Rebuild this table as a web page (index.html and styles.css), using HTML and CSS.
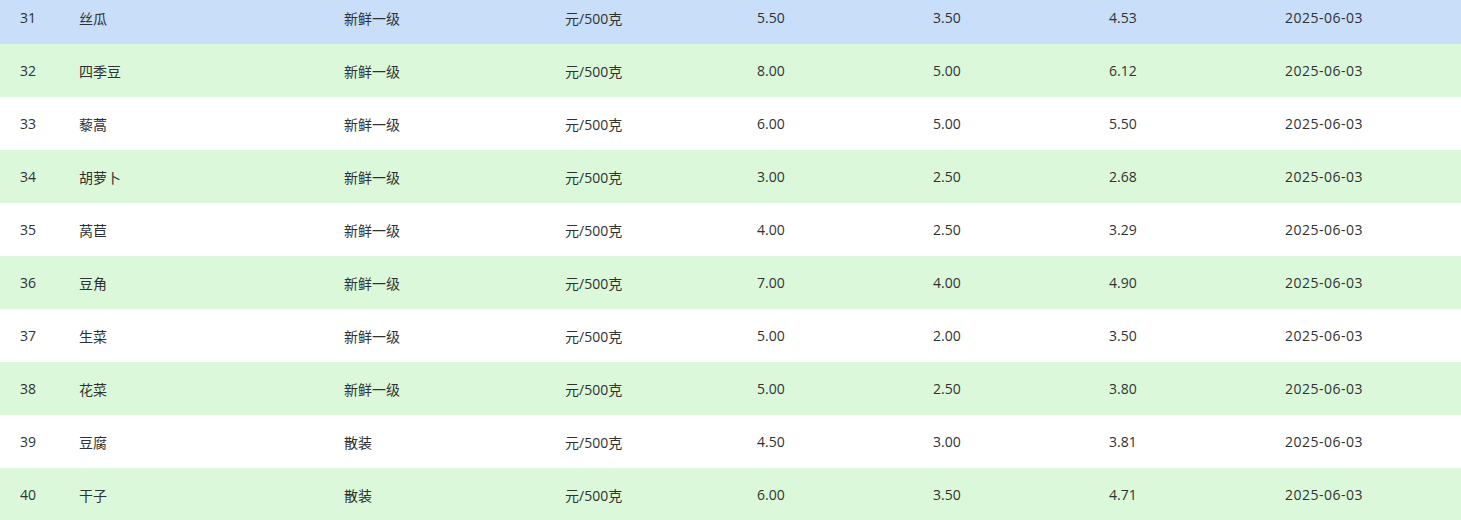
FILE: index.html
```html
<!DOCTYPE html>
<html lang="zh-CN">
<head>
<meta charset="utf-8">
<link rel="stylesheet" href="styles.css">
</head>
<body>
<div class="table">
  <div class="row current"><span class="c-idx">31</span><span>丝瓜</span><span>新鲜一级</span><span>元/500克</span><span>5.50</span><span>3.50</span><span>4.53</span><span class="date">2025-06-03</span></div>
  <div class="row alt"><span class="c-idx">32</span><span>四季豆</span><span>新鲜一级</span><span>元/500克</span><span>8.00</span><span>5.00</span><span>6.12</span><span class="date">2025-06-03</span></div>
  <div class="row"><span class="c-idx">33</span><span>藜蒿</span><span>新鲜一级</span><span>元/500克</span><span>6.00</span><span>5.00</span><span>5.50</span><span class="date">2025-06-03</span></div>
  <div class="row alt"><span class="c-idx">34</span><span>胡萝卜</span><span>新鲜一级</span><span>元/500克</span><span>3.00</span><span>2.50</span><span>2.68</span><span class="date">2025-06-03</span></div>
  <div class="row"><span class="c-idx">35</span><span>莴苣</span><span>新鲜一级</span><span>元/500克</span><span>4.00</span><span>2.50</span><span>3.29</span><span class="date">2025-06-03</span></div>
  <div class="row alt"><span class="c-idx">36</span><span>豆角</span><span>新鲜一级</span><span>元/500克</span><span>7.00</span><span>4.00</span><span>4.90</span><span class="date">2025-06-03</span></div>
  <div class="row"><span class="c-idx">37</span><span>生菜</span><span>新鲜一级</span><span>元/500克</span><span>5.00</span><span>2.00</span><span>3.50</span><span class="date">2025-06-03</span></div>
  <div class="row alt"><span class="c-idx">38</span><span>花菜</span><span>新鲜一级</span><span>元/500克</span><span>5.00</span><span>2.50</span><span>3.80</span><span class="date">2025-06-03</span></div>
  <div class="row"><span class="c-idx">39</span><span>豆腐</span><span>散装</span><span>元/500克</span><span>4.50</span><span>3.00</span><span>3.81</span><span class="date">2025-06-03</span></div>
  <div class="row alt"><span class="c-idx">40</span><span>干子</span><span>散装</span><span>元/500克</span><span>6.00</span><span>3.50</span><span>4.71</span><span class="date">2025-06-03</span></div>
</div>
</body>
</html>
```
FILE: styles.css
```css
html, body {
  margin: 0;
  padding: 0;
  background: #ffffff;
  overflow: hidden;
}
body {
  font-family: "Open Sans", "Noto Sans CJK SC", sans-serif;
  font-size: 14px;
  color: #303133;
}
.table {
  margin-top: -9px;
}
.row {
  display: grid;
  grid-template-columns: 79px 265px 221px 192px 176px 176px 176px 176px;
  height: 53px;
  align-items: center;
  background: #ffffff;
}
.row > span {
  white-space: nowrap;
}
.row .c-idx {
  padding-left: 20px;
}
.row .date {
  letter-spacing: 0.5px;
}
.row.alt {
  background: #dbf9da;
}
.row.current {
  background: #c8def9;
}
```
